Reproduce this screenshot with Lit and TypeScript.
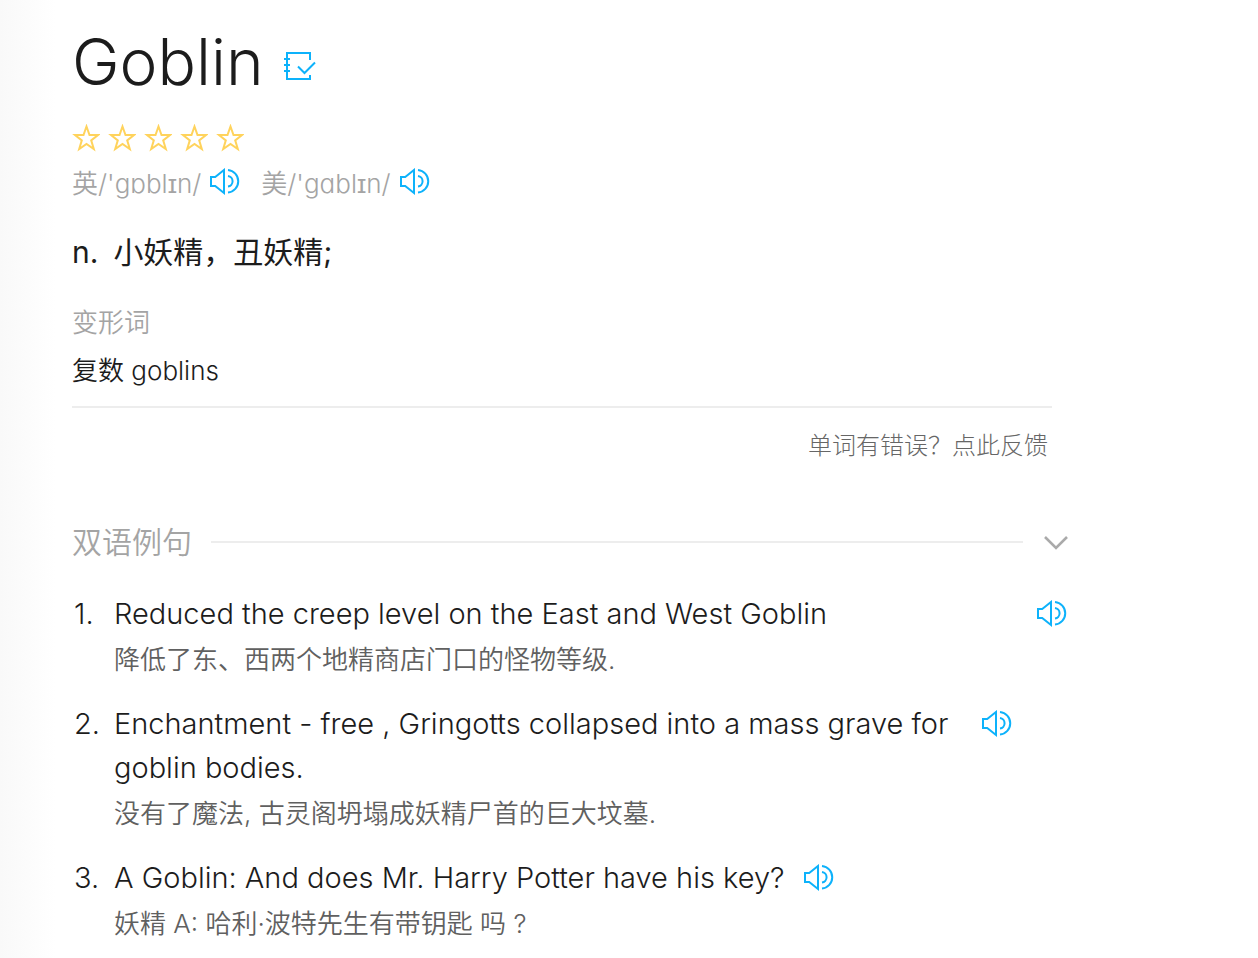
import { LitElement, html, css, svg } from "lit";
import { customElement, property } from "lit/decorators.js";
import { classMap } from "lit/directives/class-map.js";

interface Example {
  en: string;
  zh: string;
  spread?: boolean;
}

const EXAMPLES: Example[] = [
  {
    en: "Reduced the creep level on the East and West Goblin",
    zh: "降低了东、西两个地精商店门口的怪物等级.",
    spread: true,
  },
  {
    en: "Enchantment - free , Gringotts collapsed into a mass grave for goblin bodies.",
    zh: "没有了魔法, 古灵阁坍塌成妖精尸首的巨大坟墓.",
  },
  {
    en: "A Goblin: And does Mr. Harry Potter have his key?",
    zh: "妖精 A: 哈利·波特先生有带钥匙 吗 ?",
  },
];

const STAR = svg`<path d="M14.5 2.5 L17.5 11 H26 L19.2 16.4 L21.8 25 L14.5 20 L7.2 25 L9.8 16.4 L3 11 H11.5 Z" />`;

@customElement("speak-button")
export class SpeakButton extends LitElement {
  @property() label = "";

  static styles = css`
    :host {
      display: block;
      flex: none;
    }
    .speak {
      display: block;
      padding: 0;
      border: 0;
      background: none;
      color: #0db2fb;
      cursor: pointer;
    }
    .icon {
      display: block;
      width: 32px;
      height: 28px;
      fill: none;
      stroke: currentColor;
      stroke-width: 2;
    }
  `;

  render() {
    return html`<button class="speak" type="button" aria-label=${this.label}>
      <svg class="icon" viewBox="0 0 32 28" aria-hidden="true">
        <path d="M2 9 H6.2 L15 2 V25 L6.2 18 H2 Z" />
        <path d="M19 8 A5.3 5.3 0 0 1 19 18.5" />
        <path d="M19 2 A11.3 11.3 0 0 1 19 24.5" />
      </svg>
    </button>`;
  }
}

@customElement("app-root")
export class AppRoot extends LitElement {
  static styles = css`
    :host {
      display: block;
      min-height: 100vh;
      box-sizing: border-box;
      padding: 24px 190px 16px 72px;
      background: linear-gradient(to right, #f9f9f9, #fff 56px);
      color: #1c1c1c;
      font-family: Inter, "Noto Sans CJK SC", sans-serif;
    }
    .entry {
      margin-right: 16px;
    }
    .head {
      display: flex;
      align-items: center;
      gap: 20px;
    }
    .word {
      margin: 0;
      font-size: 64px;
      line-height: 76px;
      font-weight: 350;
    }
    .save {
      display: block;
      padding: 8px 0 0;
      border: 0;
      background: none;
      color: #0db2fb;
    }
    .book {
      display: block;
      width: 32px;
      height: 32px;
      fill: none;
      stroke: currentColor;
      stroke-width: 2;
    }
    .stars {
      display: flex;
      gap: 8px;
      margin-top: 24px;
    }
    .star {
      width: 28px;
      height: 28px;
      fill: none;
      stroke: #ffd35c;
      stroke-width: 2;
    }
    .sounds {
      display: flex;
      gap: 20px;
      margin-top: 12px;
    }
    .sound {
      display: flex;
      gap: 8px;
      color: #a4a4a4;
      font-size: 26px;
      line-height: 40px;
      font-weight: 350;
    }
    .listen {
      padding-top: 4px;
    }
    .meaning {
      display: flex;
      gap: 15px;
      margin: 24px 0 0;
      font-size: 30px;
      line-height: 48px;
      font-weight: 400;
    }
    .label {
      margin: 25px 0 0;
      color: #a4a4a4;
      font-size: 26px;
      line-height: 44px;
      font-weight: 350;
    }
    .forms {
      margin: 0;
      padding: 4px 0 13px;
      border-bottom: 2px solid #ededed;
      font-size: 26px;
      line-height: 44px;
      font-weight: 350;
    }
    .feedback {
      display: block;
      width: fit-content;
      margin: 20px 4px 0 auto;
      color: #666;
      font-size: 24px;
      line-height: 36px;
      font-weight: 300;
      text-decoration: none;
    }
    .section {
      display: flex;
      align-items: center;
      gap: 19px;
      margin-top: 54px;
      color: #a4a4a4;
    }
    .title {
      margin: 0;
      font-size: 30px;
      line-height: 48px;
      font-weight: 350;
    }
    .rule {
      flex: 1;
      height: 2px;
      background: #ededed;
    }
    .toggle {
      padding: 0;
      border: 0;
      background: none;
      color: #aaa;
    }
    .chevron {
      display: block;
      width: 26px;
      height: 16px;
      fill: none;
      stroke: currentColor;
      stroke-width: 2.6;
    }
    .examples {
      display: flex;
      flex-direction: column;
      gap: 20px;
      margin: 26px 0 0;
      padding: 0;
      list-style: none;
    }
    .example {
      display: grid;
      grid-template-columns: 40px 1fr;
      column-gap: 2px;
    }
    .num,
    .en {
      font-size: 29px;
      line-height: 44px;
      font-weight: 350;
    }
    .num {
      padding-left: 2px;
    }
    .line {
      display: flex;
      gap: 18px;
    }
    .en {
      max-width: 89%;
    }
    .spread {
      justify-content: space-between;
    }
    .play {
      padding-top: 8px;
    }
    .zh {
      grid-column: 2;
      margin: 0;
      padding-top: 2px;
      color: #606060;
      font-size: 26px;
      line-height: 44px;
      font-weight: 350;
    }
  `;

  render() {
    return html`
      <article class="entry">
        <header class="head">
          <h1 class="word">Goblin</h1>
          <button class="save" type="button" aria-label="生词本">
            <svg class="book" viewBox="0 0 32 32" aria-hidden="true">
              <path d="M26 10 V3 H3 V29 H26 V25" />
              <path d="M0 9 H6 M0 15 H6 M0 21 H6" />
              <path d="M14 16.5 L20.5 23 L31 12.5" />
            </svg>
          </button>
        </header>
        <div class="stars" role="img" aria-label="0 / 5">
          ${[0, 1, 2, 3, 4].map(
            () => html`<svg class="star" viewBox="0 0 28 28" aria-hidden="true">${STAR}</svg>`
          )}
        </div>
        <div class="sounds">
          <div class="sound">
            <span>英/'gɒblɪn/</span>
            <speak-button class="listen" label="英"></speak-button>
          </div>
          <div class="sound">
            <span>美/'gɑblɪn/</span>
            <speak-button class="listen" label="美"></speak-button>
          </div>
        </div>
        <p class="meaning"><span>n.</span><span>小妖精，丑妖精;</span></p>
        <h2 class="label">变形词</h2>
        <p class="forms">复数 goblins</p>
        <a class="feedback" href="#feedback">单词有错误？点此反馈</a>
      </article>
      <section>
        <header class="section">
          <h2 class="title">双语例句</h2>
          <span class="rule"></span>
          <button class="toggle" type="button" aria-label="双语例句">
            <svg class="chevron" viewBox="0 0 26 16" aria-hidden="true">
              <path d="M3 3 L14 14 L25 3" />
            </svg>
          </button>
        </header>
        <ol class="examples">
          ${EXAMPLES.map(
            (item, i) => html`<li class="example">
              <span class="num">${i + 1}.</span>
              <div class=${classMap({ line: true, spread: !!item.spread })}>
                <span class="en">${item.en}</span>
                <speak-button class="play" label=${item.en}></speak-button>
              </div>
              <p class="zh">${item.zh}</p>
            </li>`
          )}
        </ol>
      </section>
    `;
  }
}
